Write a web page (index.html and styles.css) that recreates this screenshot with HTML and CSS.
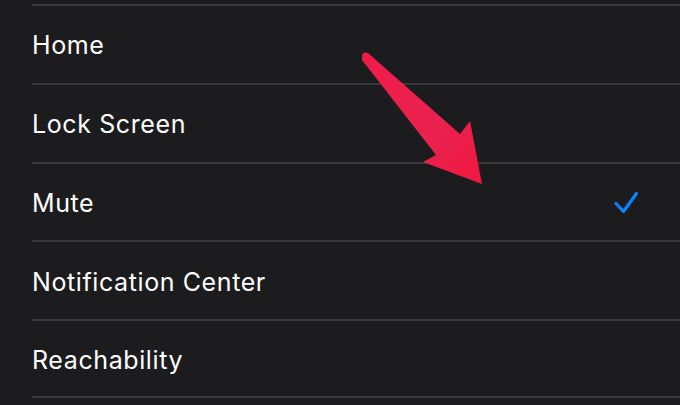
FILE: index.html
```html
<!DOCTYPE html>
<html lang="en">

<head>
    <meta charset="UTF-8">
    <title>Side Button</title>
    <meta name="viewport" content="width=device-width, initial-scale=1">
    <link rel="stylesheet" href="styles.css">
</head>

<body>
    <ul class="list">
        <li class="row">Home</li>
        <li class="row">Lock Screen</li>
        <li class="row">
            <span>Mute</span>
            <svg class="check" width="26" height="24" viewBox="0 0 26 24">
                <path d="M3 12.5 L10.5 20.5 L23.5 2.5" fill="none" stroke="#0a84ff" stroke-width="3.2" stroke-linecap="round" stroke-linejoin="round" />
            </svg>
        </li>
        <li class="row">Notification Center</li>
        <li class="row last">Reachability</li>
    </ul>

    <svg class="arrow" width="680" height="405" viewBox="0 0 680 405">
        <defs>
            <linearGradient id="red" x1="0" y1="0" x2="1" y2="1">
                <stop offset="0" stop-color="#f01c4a" />
                <stop offset="0.6" stop-color="#e9224f" />
                <stop offset="1" stop-color="#f0163f" />
            </linearGradient>
        </defs>
        <path d="M362 57 Q362 51 368 53 L460 134 L470 121 L482 184 L423 162 L436 155 L362 60 Z" fill="url(#red)" />
    </svg>
</body>

</html>
```

FILE: styles.css
```css
body {
    margin: 0;
    background-color: #1c1c1e;
    font-family: Inter, "Liberation Sans", sans-serif;
    color: #ffffff;
    height: 405px;
    overflow: hidden;
    position: relative;
}

.list {
    list-style: none;
    margin: 0;
    padding: 4px 0 0 32px;
}

.row {
    box-sizing: border-box;
    height: 78.8px;
    border-top: 2px solid #38383a;
    display: flex;
    align-items: center;
    justify-content: space-between;
    padding: 2px 41px 0 0;
    font-size: 25px;
    letter-spacing: 0.6px;
}

.row.last {
    border-bottom: 2px solid #38383a;
}

.check {
    display: block;
}

.arrow {
    position: absolute;
    left: 0;
    top: 0;
}
```
